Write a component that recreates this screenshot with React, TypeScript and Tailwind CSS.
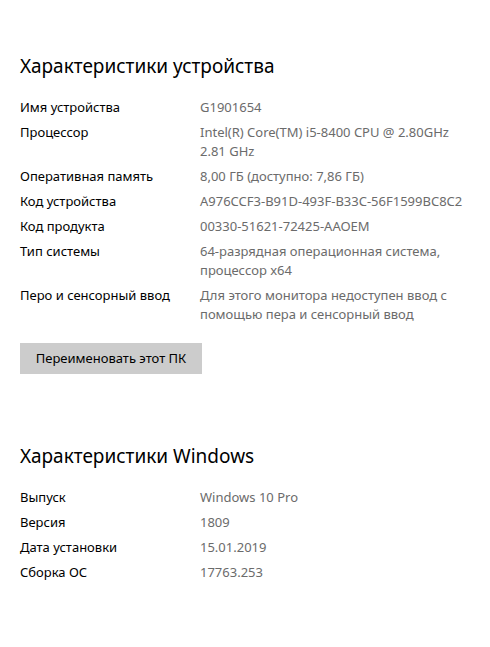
import React from 'react';

type Row = { label: string; value: string[] };

const device: Row[] = [
  { label: 'Имя устройства', value: ['G1901654'] },
  { label: 'Процессор', value: ['Intel(R) Core(TM) i5-8400 CPU @ 2.80GHz', '2.81 GHz'] },
  { label: 'Оперативная память', value: ['8,00 ГБ (доступно: 7,86 ГБ)'] },
  { label: 'Код устройства', value: ['A976CCF3-B91D-493F-B33C-56F1599BC8C2'] },
  { label: 'Код продукта', value: ['00330-51621-72425-AAOEM'] },
  { label: 'Тип системы', value: ['64-разрядная операционная система,', 'процессор x64'] },
  {
    label: 'Перо и сенсорный ввод',
    value: ['Для этого монитора недоступен ввод с', 'помощью пера и сенсорный ввод'],
  },
];

const windows: Row[] = [
  { label: 'Выпуск', value: ['Windows 10 Pro'] },
  { label: 'Версия', value: ['1809'] },
  { label: 'Дата установки', value: ['15.01.2019'] },
  { label: 'Сборка ОС', value: ['17763.253'] },
];

const InfoTable: React.FC<{ rows: Row[] }> = ({ rows }) => (
  <div className="flex flex-col gap-[6px]">
    {rows.map(row => (
      <div key={row.label} className="flex text-[13px] leading-[19px]">
        <div className="w-[180px] shrink-0 text-black">{row.label}</div>
        <div className="whitespace-nowrap text-[#6b6b6b]">
          {row.value.map(line => (
            <div key={line}>{line}</div>
          ))}
        </div>
      </div>
    ))}
  </div>
);

const App: React.FC = () => {
  return (
    <div
      className="min-h-[647px] w-[490px] bg-white px-5 pt-[52px]"
      style={{ fontFamily: '"Noto Sans", "Open Sans", sans-serif' }}
    >
      <h2 className="mb-[18px] text-[19px] leading-[28px] text-black">
        Характеристики устройства
      </h2>
      <InfoTable rows={device} />

      <button
        type="button"
        className="mt-[19px] h-[31px] w-[182px] bg-[#cccccc] text-[13px] text-black"
      >
        Переименовать этот ПК
      </button>

      <h2 className="mt-[68px] mb-[18px] text-[19px] leading-[28px] text-black">
        Характеристики Windows
      </h2>
      <InfoTable rows={windows} />
    </div>
  );
};

export default App;
